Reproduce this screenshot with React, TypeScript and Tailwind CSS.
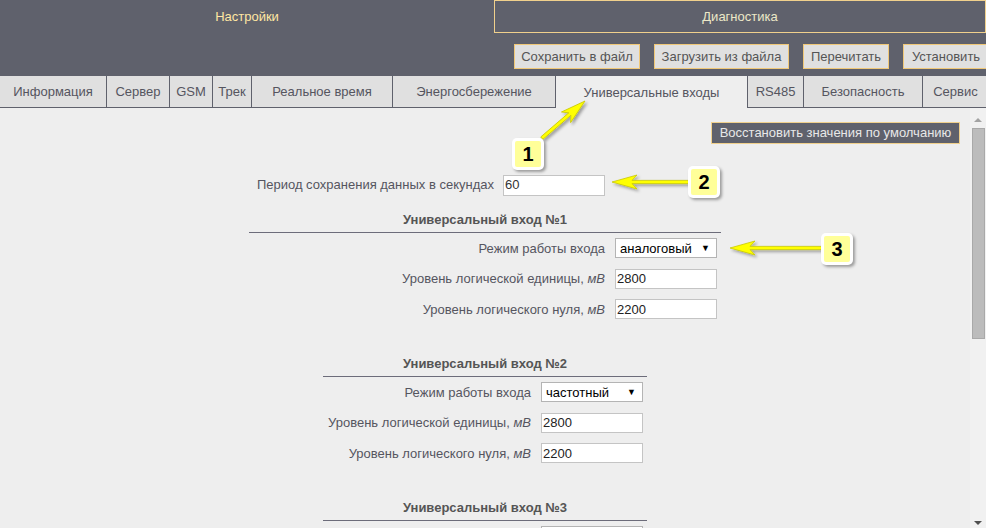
import React from 'react';

const topButtons = [
  { label: 'Сохранить в файл', w: 'w-[126px]' },
  { label: 'Загрузить из файла', w: 'w-[135px]' },
  { label: 'Перечитать', w: 'w-[86px]' },
  { label: 'Установить', w: 'w-[86px]' },
];

const tabs = [
  { label: 'Информация', w: 'w-[107px]' },
  { label: 'Сервер', w: 'w-[63px]' },
  { label: 'GSM', w: 'w-[43px]' },
  { label: 'Трек', w: 'w-[39px]' },
  { label: 'Реальное время', w: 'w-[141px]' },
  { label: 'Энергосбережение', w: 'w-[163px]' },
  { label: 'Универсальные входы', w: 'w-[192px]', active: true },
  { label: 'RS485', w: 'w-[56px]' },
  { label: 'Безопасность', w: 'w-[119px]' },
  { label: 'Сервис', w: 'w-[66px]' },
];

const sections = [
  { title: 'Универсальный вход №1', mode: 'аналоговый', wide: true },
  { title: 'Универсальный вход №2', mode: 'частотный', wide: false },
  { title: 'Универсальный вход №3', mode: 'частотный', wide: false },
];

function TextBox({ value }: { value: string }) {
  return (
    <div className="ml-[10px] flex h-[20px] w-[102px] items-center border border-[#c4c4c4] bg-white pl-[1px] text-[#222]">
      {value}
    </div>
  );
}

function SelectBox({ value }: { value: string }) {
  return (
    <div className="ml-[10px] flex h-[20px] w-[102px] items-center justify-between border border-[#b4b4b4] bg-white pl-[4px] pr-[6px] text-black">
      <span>{value}</span>
      <span className="text-[9px]">▼</span>
    </div>
  );
}

function Section({ title, mode, wide }: { title: string; mode: string; wide: boolean }) {
  const labelW = wide ? 'w-[356px]' : 'w-[208px]';
  return (
    <div className={`mx-auto mt-[31.5px] flex flex-col ${wide ? 'w-[472px]' : 'w-[324px]'}`}>
      <div className="h-[21px] border-b border-[#6c6c7a] pb-[5px] text-center font-bold leading-[16px] text-[#555]">
        {title}
      </div>
      <div className="flex h-[30.5px] items-center">
        <div className={`${labelW} text-right text-[#55555f]`}>Режим работы входа</div>
        <SelectBox value={mode} />
      </div>
      <div className="flex h-[30.5px] items-center">
        <div className={`${labelW} text-right text-[#55555f]`}>
          Уровень логической единицы, <i>мВ</i>
        </div>
        <TextBox value="2800" />
      </div>
      <div className="flex h-[30.5px] items-center">
        <div className={`${labelW} text-right text-[#55555f]`}>
          Уровень логического нуля, <i>мВ</i>
        </div>
        <TextBox value="2200" />
      </div>
    </div>
  );
}

function Badge({ n, pos }: { n: string; pos: string }) {
  return (
    <div className={`absolute h-[32px] w-[32px] rounded-[5px] bg-white p-[3px] shadow-[2px_2px_3px_rgba(0,0,0,0.35)] ${pos}`}>
      <div className="flex h-full w-full items-center justify-center rounded-[2px] bg-[#ffff99] text-[20px] font-bold leading-none text-black">
        {n}
      </div>
    </div>
  );
}

function Arrow({ x, y, len, angle }: { x: number; y: number; len: number; angle: number }) {
  const head = 25;
  const pts = [
    [0, 0],
    [head, -7],
    [head - 5, -1.6],
    [len, -1.6],
    [len, 1.6],
    [head - 5, 1.6],
    [head, 7],
  ]
    .map((p) => p.join(','))
    .join(' ');
  return (
    <g transform={`translate(${x},${y}) rotate(${angle})`}>
      <polygon points={pts} fill="#ffff00" stroke="#c9c900" strokeWidth="0.8" strokeLinejoin="round" />
    </g>
  );
}

export default function App() {
  return (
    <div className="relative h-[528px] w-[986px] overflow-hidden bg-[#eeeeee] font-['Liberation_Sans',Arial,sans-serif] text-[13px]">
      {/* header */}
      <div className="flex h-[76px] flex-col bg-[#5f616c]">
        <div className="flex h-[33px]">
          <div className="flex w-[494px] items-center justify-center text-[#ffe7a3]">Настройки</div>
          <div className="flex flex-1 items-center justify-center border border-[#f0d08c] text-[#ece8c8]">
            Диагностика
          </div>
        </div>
        <div className="mr-[-3px] mt-[11px] flex justify-end gap-[14px]">
          {topButtons.map((b) => (
            <div
              key={b.label}
              className={`flex h-[25px] shrink-0 items-center justify-center border border-[#f0c878] bg-[#e0e0e0] text-[#555] ${b.w}`}
            >
              {b.label}
            </div>
          ))}
        </div>
      </div>

      {/* tabs */}
      <div className="flex h-[32px] bg-[#5f616c]">
        {tabs.map((t) => (
          <div
            key={t.label}
            className={`flex shrink-0 items-center justify-center border-r border-[#5f616c] pt-[1px] text-[#55555f] ${t.w} ${
              t.active ? 'bg-[#eeeeee]' : 'mb-[1px] bg-[#e0e0e0]'
            }`}
          >
            {t.label}
          </div>
        ))}
      </div>

      {/* content */}
      <div className="flex h-[420px]">
        <div className="flex min-w-0 flex-1 flex-col overflow-hidden">
          <div className="mr-[10px] mt-[14px] flex h-[22px] w-[249px] items-center justify-center self-end border border-[#f0d08c] bg-[#5f616c] text-[#e8e8e8]">
            Восстановить значения по умолчанию
          </div>
          <div className="mt-[31px] flex h-[21px] items-center pl-[249px]">
            <div className="w-[245px] text-right text-[#55555f]">Период сохранения данных в секундах</div>
            <div className="ml-[9px] flex h-[21px] w-[102px] items-center border border-[#c4c4c4] bg-white pl-[1px] text-[#333]">
              60
            </div>
          </div>
          <div className="-mt-[15px] flex flex-col">
            {sections.map((s) => (
              <Section key={s.title} {...s} />
            ))}
          </div>
        </div>
        {/* scrollbar */}
        <div className="flex w-[16px] shrink-0 flex-col items-center bg-[#f1f1f1] pt-[2px]">
          <div className="mt-[8px] h-0 w-0 border-x-[4px] border-b-[4px] border-x-transparent border-b-[#a3a3a3]" />
          <div className="mt-[6px] h-[211px] w-[13px] border border-[#a9a9a9] bg-[#bcbcbc]" />
          <div className="mt-auto mb-[3px] h-0 w-0 border-x-[4px] border-t-[4px] border-x-transparent border-t-[#505050]" />
        </div>
      </div>

      {/* annotations */}
      <svg className="pointer-events-none absolute left-0 top-0" width="986" height="528">
        <defs>
          <filter id="sh" x="-20%" y="-50%" width="140%" height="200%">
            <feDropShadow dx="2" dy="2" stdDeviation="1.5" floodColor="#000" floodOpacity="0.35" />
          </filter>
        </defs>
        <g filter="url(#sh)">
          <Arrow x={585} y={101} len={57} angle={139.3} />
          <Arrow x={612} y={182} len={77} angle={0} />
          <Arrow x={730} y={248} len={92} angle={0} />
        </g>
      </svg>
      <Badge n="1" pos="left-[512px] top-[138px]" />
      <Badge n="2" pos="left-[688px] top-[166px]" />
      <Badge n="3" pos="left-[821px] top-[233px]" />
    </div>
  );
}
